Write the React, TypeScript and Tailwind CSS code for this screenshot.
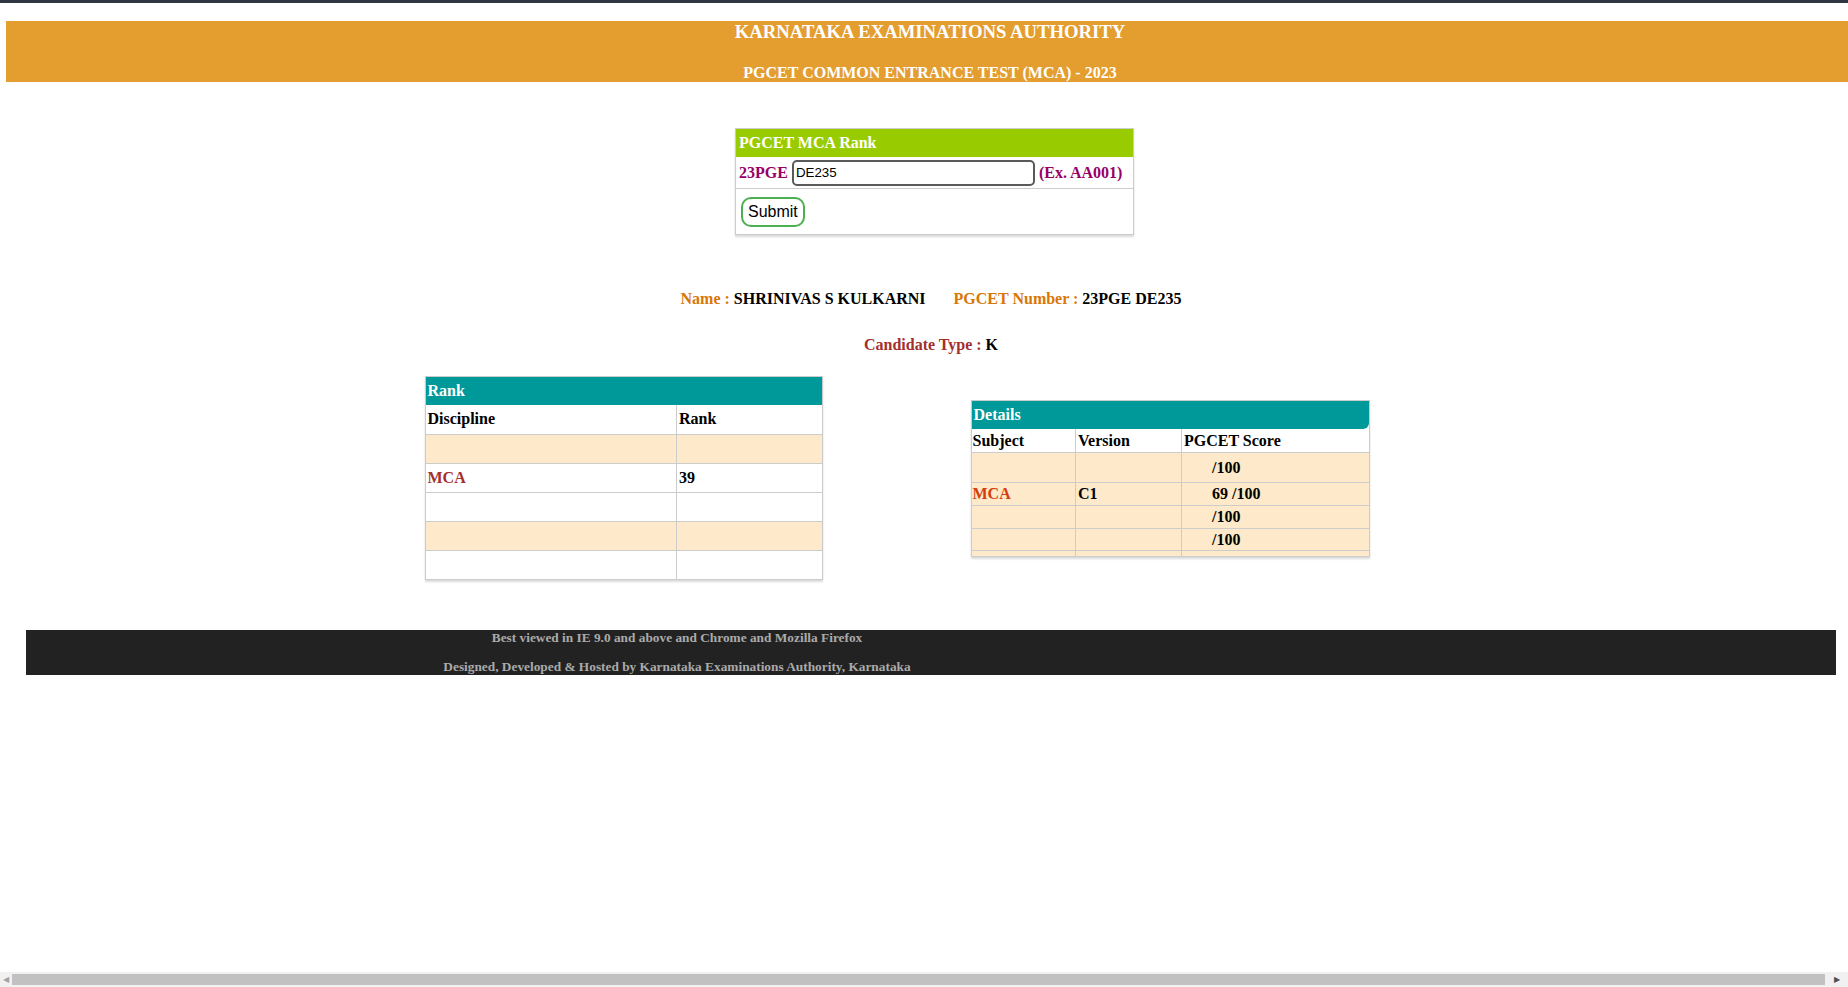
import React from "react";

const rankRows = [
  { discipline: "", rank: "", peach: true },
  { discipline: "MCA", rank: "39", peach: false },
  { discipline: "", rank: "", peach: false },
  { discipline: "", rank: "", peach: true },
  { discipline: "", rank: "", peach: false },
];

const scoreRows = [
  { subject: "", version: "", score: "/100", h: "h-[30px]" },
  { subject: "MCA", version: "C1", score: "69 /100", h: "h-[23px]" },
  { subject: "", version: "", score: "/100", h: "h-[23px]" },
  { subject: "", version: "", score: "/100", h: "h-[22px]" },
  { subject: "", version: "", score: "", h: "h-[5px]" },
];

function RankForm() {
  return (
    <div className="flex justify-center pl-[21px] mt-[46px]">
      <div className="w-[399px] border border-[#cccccc] shadow-[0_2px_2px_rgba(0,0,0,0.15)] bg-white">
        <div className="h-[28px] bg-[#99cc00] text-white font-bold text-[16px] leading-[28px] pl-[3px]">
          PGCET MCA Rank
        </div>
        <div className="h-[32px] flex items-center gap-[4px] pl-[3px] border-b border-[#cccccc]">
          <span className="text-[#990066] font-bold text-[16px]">23PGE</span>
          <input
            type="text"
            defaultValue="DE235"
            className="w-[243px] h-[26px] border-2 border-[#5a5a5a] rounded-[5px] px-[2px] text-[13.33px] text-black font-['Liberation_Sans',Arial,sans-serif] outline-none"
          />
          <span className="text-[#990066] font-bold text-[16px]">(Ex. AA001)</span>
        </div>
        <div className="h-[45px] flex items-center pl-[5px]">
          <button className="h-[30px] px-[5px] border-2 border-[#4caf50] rounded-[10px] bg-white text-black text-[16px] font-['Liberation_Sans',Arial,sans-serif]">
            Submit
          </button>
        </div>
      </div>
    </div>
  );
}

function CandidateInfo() {
  return (
    <div className="font-bold text-[16px] leading-[20px]">
      <div className="flex justify-center pl-[14px] mt-[54px]">
        <span className="text-[#d97706]">Name :&nbsp;</span>
        <span className="text-black">SHRINIVAS S KULKARNI</span>
        <span className="w-[28px]" />
        <span className="text-[#d97706]">PGCET Number :&nbsp;</span>
        <span className="text-black">23PGE DE235</span>
      </div>
      <div className="flex justify-center pl-[14px] mt-[26px]">
        <span className="text-[#a3302c]">Candidate Type :&nbsp;</span>
        <span className="text-black">K</span>
      </div>
    </div>
  );
}

function RankTable() {
  return (
    <div className="w-[398px] border border-[#cccccc] shadow-[0_2px_2px_rgba(0,0,0,0.15)] bg-white">
      <div className="h-[28px] bg-[#009999] text-white font-bold text-[16px] leading-[28px] pl-[2px]">
        Rank
      </div>
      <table className="w-full border-collapse text-[16px] font-bold">
        <tbody>
          <tr className="h-[29px] bg-white">
            <td className="w-[251px] border-r border-[#cccccc] pl-[2px] text-black">Discipline</td>
            <td className="pl-[2px] text-black">Rank</td>
          </tr>
          {rankRows.map((r, i) => (
            <tr
              key={i}
              className={`h-[29px] border-t border-[#cccccc] ${r.peach ? "bg-[#fee9ca]" : "bg-white"}`}
            >
              <td className="w-[251px] border-r border-[#cccccc] pl-[2px] text-[#a3302c]">{r.discipline}</td>
              <td className="pl-[2px] text-black">{r.rank}</td>
            </tr>
          ))}
        </tbody>
      </table>
    </div>
  );
}

function DetailsTable() {
  return (
    <div className="w-[399px] border border-[#cccccc] shadow-[0_2px_2px_rgba(0,0,0,0.15)] bg-white">
      <div className="h-[28px] bg-[#009999] rounded-br-[6px] text-white font-bold text-[16px] leading-[28px] pl-[2px]">
        Details
      </div>
      <table className="w-full border-collapse text-[16px] font-bold leading-[18px]">
        <tbody>
          <tr className="h-[24px] bg-white">
            <td className="w-[104px] border-r border-[#cccccc] pl-[1px] pt-[1px] text-black">Subject</td>
            <td className="w-[106px] border-r border-[#cccccc] pl-[2px] pt-[1px] text-black">Version</td>
            <td className="pl-[2px] pt-[1px] text-black">PGCET Score</td>
          </tr>
          {scoreRows.map((r, i) => (
            <tr key={i} className={`${r.h} border-t border-[#cccccc] bg-[#fee9ca]`}>
              <td className="w-[104px] border-r border-[#cccccc] pl-[1px] text-[#d63c0d]">{r.subject}</td>
              <td className="w-[106px] border-r border-[#cccccc] pl-[2px] text-black">{r.version}</td>
              <td className="pl-[30px] text-black">{r.score}</td>
            </tr>
          ))}
        </tbody>
      </table>
    </div>
  );
}

function Footer() {
  return (
    <div className="ml-[26px] w-[1810px] h-[45px] bg-[#222222] mt-[50px]">
      <div className="w-[1302px] text-center text-[#aaaaaa] font-bold text-[13.33px] leading-[15px]">
        <div>Best viewed in IE 9.0 and above and Chrome and Mozilla Firefox</div>
        <div className="mt-[14px]">Designed, Developed &amp; Hosted by Karnataka Examinations Authority, Karnataka</div>
      </div>
    </div>
  );
}

function FakeScrollbar() {
  return (
    <div className="fixed bottom-0 left-0 w-full h-[15px] bg-[#f1f1f1] flex items-center">
      <span className="w-[12px] flex justify-center text-[#a3a3a3] text-[8px] leading-none">◀</span>
      <div className="flex-1 h-[11px] bg-[#c1c1c1] mr-[1px]" />
      <span className="w-[22px] flex justify-center text-[#505050] text-[8px] leading-none">▶</span>
    </div>
  );
}

export default function App() {
  return (
    <div className="min-h-screen bg-white font-['Liberation_Serif','Times_New_Roman',serif]">
      <div className="h-[3px] bg-[#2f3542]" />
      <div className="ml-[6px] mt-[18px] h-[61px] bg-[#e49d2f] text-white text-center font-bold">
        <div className="pl-[6px] text-[18.7px] leading-[22px]">KARNATAKA EXAMINATIONS AUTHORITY</div>
        <div className="pl-[6px] mt-[20px] text-[16px] leading-[19px]">PGCET COMMON ENTRANCE TEST (MCA) - 2023</div>
      </div>
      <RankForm />
      <CandidateInfo />
      <div className="flex justify-center items-center gap-[148px] pr-[54px] mt-[21px]">
        <RankTable />
        <DetailsTable />
      </div>
      <Footer />
      <FakeScrollbar />
    </div>
  );
}
